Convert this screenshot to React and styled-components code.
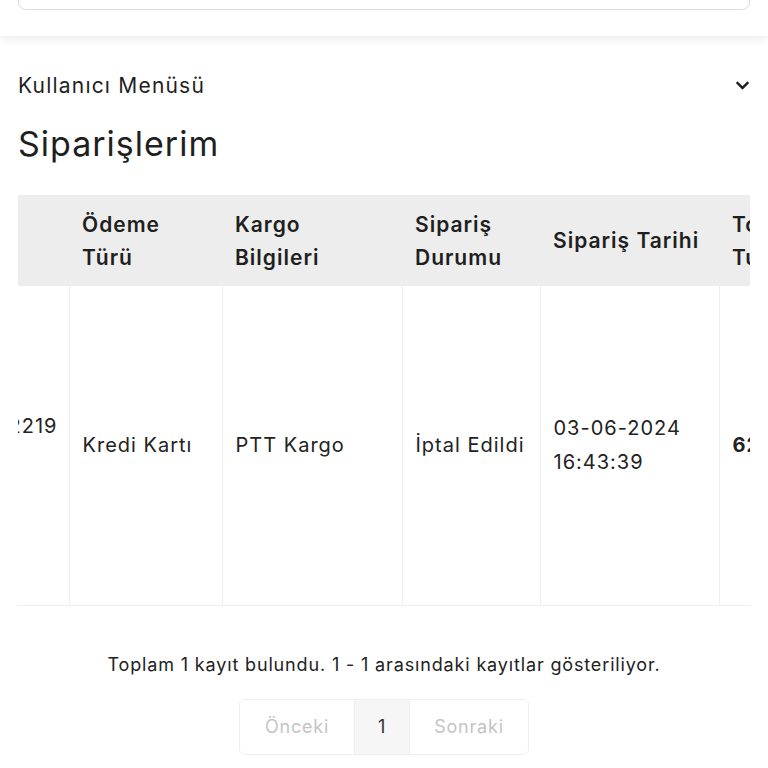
import React, { useLayoutEffect, useRef } from 'react';
import styled, { createGlobalStyle } from 'styled-components';
import { FaChevronDown } from 'react-icons/fa';

const GlobalStyle = createGlobalStyle`
    html, body{
        margin: 0;
        background: #ffffff;
        font-family: Inter, "Open Sans", sans-serif;
        color: #222222;
    }
`

const TopBar = styled.header`
    height: 36px;
    overflow: hidden;
    display: flex;
    align-items: flex-end;
    padding: 0 18px 26px 18px;
    box-sizing: border-box;
    background: #ffffff;
    box-shadow: 0 4px 10px rgba(0, 0, 0, 0.07);
`

const SearchBox = styled.div`
    flex: 1;
    height: 48px;
    flex-shrink: 0;
    border: 1px solid #dcdcdc;
    border-radius: 8px;
`

const Main = styled.main`
    padding: 0 18px;
`

const MenuToggle = styled.div`
    display: flex;
    align-items: center;
    justify-content: space-between;
    height: 30px;
    margin-top: 34px;
    font-size: 21px;
    letter-spacing: 1.2px;
    color: #1f1f1f;

    svg{
        font-size: 15px;
        margin-right: 0;
    }
`

const Title = styled.h1`
    margin: 20px 0 0 0;
    font-size: 34px;
    font-weight: 400;
    letter-spacing: 1px;
    line-height: 48px;
    color: #1f1f1f;
`

const TableScroll = styled.div`
    margin-top: 27px;
    overflow-x: auto;
    scrollbar-width: none;

    &::-webkit-scrollbar{
        display: none;
    }
`

const Table = styled.table`
    border-collapse: collapse;
    font-size: 20px;
    letter-spacing: 1px;
    line-height: 34px;
`

const Th = styled.th`
    min-width: ${props => props.w}px;
    max-width: ${props => props.w}px;
    box-sizing: border-box;
    padding: 12px 13px;
    height: 91px;
    background: #ededed;
    text-align: left;
    vertical-align: middle;
    font-weight: 600;
    font-size: 21px;
    letter-spacing: 1px;
    line-height: 33px;
    color: #1f1f1f;
`

const Td = styled.td`
    box-sizing: border-box;
    padding: ${props => props.lead ? '12px 11px 50px 13px' : '12px 13px'};
    height: 319px;
    vertical-align: middle;
    text-align: ${props => props.lead ? 'right' : 'left'};
    border-left: 1px solid #eeeeee;
    border-bottom: 1px solid #eeeeee;
    color: #222222;
    font-weight: ${props => props.bold ? 700 : 400};
    white-space: ${props => props.nowrap ? 'nowrap' : 'normal'};

    &:first-child{
        border-left: none;
    }
`

const Footer = styled.div`
    display: flex;
    flex-direction: column;
    align-items: center;
    margin-top: 44px;
`

const Summary = styled.p`
    margin: 0;
    font-size: 18px;
    letter-spacing: 0.85px;
    line-height: 30px;
    color: #222222;
`

const Pagination = styled.div`
    display: flex;
    margin-top: 19px;
    border: 1px solid #eeeeee;
    border-radius: 6px;
    overflow: hidden;
`

const PageItem = styled.span`
    display: flex;
    align-items: center;
    justify-content: center;
    width: ${props => props.w}px;
    height: 54px;
    font-size: 18px;
    letter-spacing: 0.8px;
    color: ${props => props.active ? '#333333' : '#c4c4c4'};
    background: ${props => props.active ? '#f6f6f6' : '#ffffff'};
    border-left: ${props => props.active ? '1px solid #eeeeee' : 'none'};
    border-right: ${props => props.active ? '1px solid #eeeeee' : 'none'};
`

const columns = [
    {label: 'Sipariş No', w: 210},
    {label: 'Ödeme Türü', w: 153},
    {label: 'Kargo Bilgileri', w: 180},
    {label: 'Sipariş Durumu', w: 138},
    {label: 'Sipariş Tarihi', w: 179},
    {label: 'Toplam Tutar', w: 150},
    {label: 'İşlemler', w: 160},
]

const order = {
    no: 'SP2406032219',
    payment: 'Kredi Kartı',
    cargo: 'PTT Kargo',
    status: 'İptal Edildi',
    date: '03-06-2024',
    time: '16:43:39',
    total: '629,90 TL',
}

const OrdersTable = () => {
    const scrollRef = useRef(null)
    const firstCol = useRef(null)

    useLayoutEffect(() => {
        // the table is scrolled so only the tail of the first column shows
        if(scrollRef.current && firstCol.current){
            scrollRef.current.scrollLeft = firstCol.current.offsetWidth - 51
        }
    }, [])

    return(
        <TableScroll ref={scrollRef}>
            <Table>
                <thead>
                    <tr>
                        {columns.map((col, i) => (
                            <Th key={col.label} w={col.w} ref={i === 0 ? firstCol : null}>{col.label}</Th>
                        ))}
                    </tr>
                </thead>
                <tbody>
                    <tr>
                        <Td lead>{order.no}</Td>
                        <Td>{order.payment}</Td>
                        <Td>{order.cargo}</Td>
                        <Td nowrap>{order.status}</Td>
                        <Td>{order.date}<br />{order.time}</Td>
                        <Td bold nowrap>{order.total}</Td>
                        <Td>Detay</Td>
                    </tr>
                </tbody>
            </Table>
        </TableScroll>
    )
}

const App = () => {
    return(
        <>
            <GlobalStyle />
            <TopBar>
                <SearchBox />
            </TopBar>
            <Main>
                <MenuToggle>
                    <span>Kullanıcı Menüsü</span>
                    <FaChevronDown />
                </MenuToggle>
                <Title>Siparişlerim</Title>
                <OrdersTable />
                <Footer>
                    <Summary>Toplam 1 kayıt bulundu. 1 - 1 arasındaki kayıtlar gösteriliyor.</Summary>
                    <Pagination>
                        <PageItem w={114}>Önceki</PageItem>
                        <PageItem w={54} active>1</PageItem>
                        <PageItem w={118}>Sonraki</PageItem>
                    </Pagination>
                </Footer>
            </Main>
        </>
    )
}

export default App;
